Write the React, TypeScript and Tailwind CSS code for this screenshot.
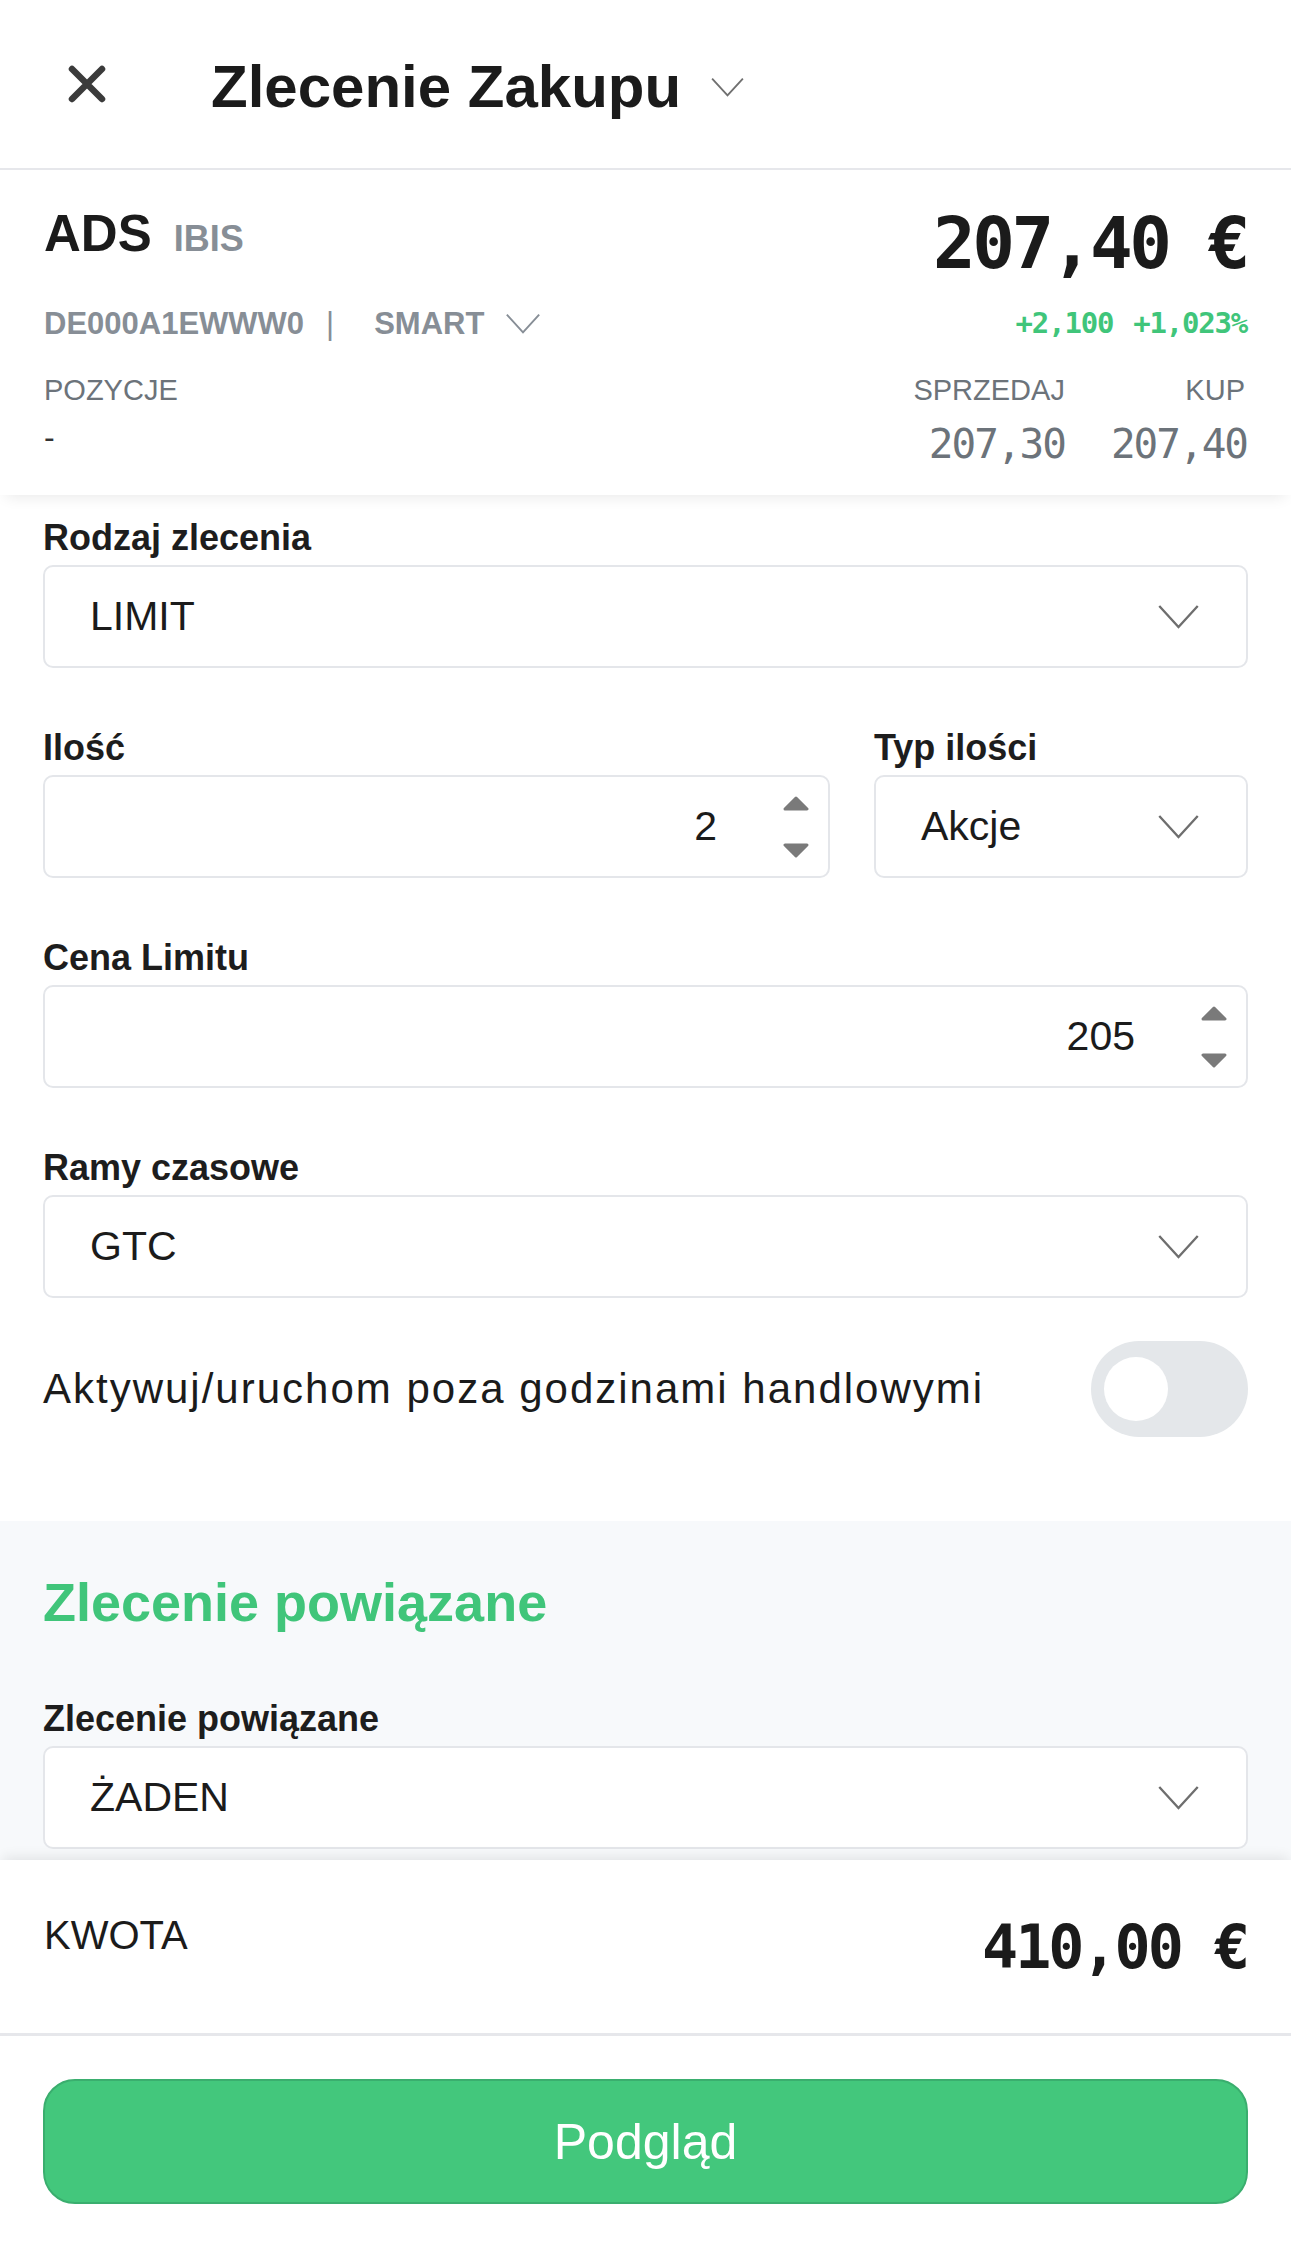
import React from 'react';

function Chevron({ className }: { className?: string }) {
  return (
    <svg viewBox="0 0 44 26" className={className} fill="none" stroke="currentColor" strokeWidth={2.4}>
      <path d="M2 2l20 22L42 2" />
    </svg>
  );
}

function Spinner({ className = '' }: { className?: string }) {
  return (
    <div className={`flex flex-col items-center gap-[32px] text-[#7a7a7a] ${className}`}>
      <svg width="26" height="15" viewBox="0 0 26 15">
        <path d="M13 2L24 13H2Z" fill="currentColor" stroke="currentColor" strokeWidth={3} strokeLinejoin="round" />
      </svg>
      <svg width="26" height="15" viewBox="0 0 26 15">
        <path d="M2 2H24L13 13Z" fill="currentColor" stroke="currentColor" strokeWidth={3} strokeLinejoin="round" />
      </svg>
    </div>
  );
}

function Label({ children }: { children: React.ReactNode }) {
  return <div className="mb-[9px] text-[36px] font-bold leading-none text-[#1d1d1d]">{children}</div>;
}

function SelectBox({ value }: { value: string }) {
  return (
    <div className="flex h-[103px] items-center justify-between rounded-[10px] border-2 border-[#e4e6ea] bg-white pl-[45px] pr-[46px]">
      <span className="text-[41px] leading-none text-[#1b1b1b]">{value}</span>
      <Chevron className="h-[25px] w-[43px] text-[#6e6e6e]" />
    </div>
  );
}

function NumberBox({ value }: { value: string }) {
  return (
    <div className="flex h-[103px] items-center justify-end rounded-[10px] border-2 border-[#e4e6ea] bg-white pr-[19px]">
      <span className="text-[41px] leading-none text-[#1b1b1b]">{value}</span>
      <Spinner className="ml-[66px]" />
    </div>
  );
}

export default function App() {
  return (
    <div className="flex h-[2246px] w-full flex-col overflow-hidden bg-white font-['Liberation_Sans',Arial,sans-serif] text-[#1b1b1b]">
      {/* header */}
      <div className="flex h-[170px] shrink-0 items-center border-b-2 border-[#e6e7eb] pl-[68px]">
        <svg width="38" height="38" viewBox="0 0 38 38" fill="none" stroke="#3b3b3b" strokeWidth={6.5} strokeLinecap="round">
          <path d="M4 4L34 34M34 4L4 34" />
        </svg>
        <div className="ml-[105px] mt-[6px] flex items-center">
          <span className="text-[60px] font-bold leading-none text-[#1b1b1b]">Zlecenie Zakupu</span>
          <Chevron className="ml-[27px] h-[20px] w-[39px] text-[#707070]" />
        </div>
      </div>

      {/* instrument */}
      <div className="relative z-10 shrink-0 bg-white px-[44px] pb-[30px] pt-[38px] shadow-[0_8px_14px_-6px_rgba(0,0,0,0.09)]">
        <div className="flex items-start justify-between">
          <div className="flex items-baseline">
            <span className="text-[51px] font-bold leading-none text-[#1b1b1b]">ADS</span>
            <span className="ml-[22px] text-[36px] font-bold leading-none text-[#878e96]">IBIS</span>
          </div>
          <div className="font-['DejaVu_Sans_Mono',monospace] text-[71px] font-bold leading-none tracking-[-3.5px] text-[#1b1b1b]">
            207,40 €
          </div>
        </div>

        <div className="mt-[29px] flex items-center justify-between">
          <div className="flex items-center text-[31px] font-bold leading-none text-[#878e96]">
            <span>DE000A1EWWW0</span>
            <span className="ml-[22px] font-normal">|</span>
            <span className="ml-[40px]">SMART</span>
            <Chevron className="ml-[20px] h-[21px] w-[38px] text-[#878e96]" />
          </div>
          <div className="flex gap-[20px] font-['DejaVu_Sans_Mono',monospace] text-[29px] font-bold leading-none tracking-[-1.2px] text-[#40c57a]">
            <span>+2,100</span>
            <span>+1,023%</span>
          </div>
        </div>

        <div className="mt-[37px] flex justify-between">
          <div>
            <div className="text-[29px] leading-none text-[#6c737a]">POZYCJE</div>
            <div className="mt-[12px] text-[32px] leading-[41px] text-[#333333]">-</div>
          </div>
          <div className="flex gap-[46px]">
            <div className="flex flex-col items-end">
              <div className="text-[29px] leading-none text-[#6c737a]">SPRZEDAJ</div>
              <div className="mt-[19px] font-['DejaVu_Sans_Mono',monospace] text-[41px] leading-none tracking-[-2px] text-[#6c737a]">
                207,30
              </div>
            </div>
            <div className="flex flex-col items-end">
              <div className="mr-[2px] text-[29px] leading-none text-[#6c737a]">KUP</div>
              <div className="mt-[19px] font-['DejaVu_Sans_Mono',monospace] text-[41px] leading-none tracking-[-2px] text-[#6c737a]">
                207,40
              </div>
            </div>
          </div>
        </div>
      </div>

      {/* scrolling form */}
      <div className="flex min-h-0 flex-1 flex-col overflow-hidden">
        <div className="flex flex-col gap-[62px] px-[43px] pb-[84px] pt-[25px]">
          <div>
            <Label>Rodzaj zlecenia</Label>
            <SelectBox value="LIMIT" />
          </div>

          <div className="grid grid-cols-[1fr_374px] gap-x-[44px]">
            <div>
              <Label>Ilość</Label>
              <NumberBox value="2" />
            </div>
            <div>
              <Label>Typ ilości</Label>
              <SelectBox value="Akcje" />
            </div>
          </div>

          <div>
            <Label>Cena Limitu</Label>
            <NumberBox value="205" />
          </div>

          <div>
            <Label>Ramy czasowe</Label>
            <SelectBox value="GTC" />
            <div className="mt-[43px] flex items-center justify-between">
              <span className="text-[42px] leading-none tracking-[2px] text-[#1b1b1b]">
                Aktywuj/uruchom poza godzinami handlowymi
              </span>
              <div className="flex h-[96px] w-[157px] items-center rounded-full bg-[#e4e7ea] pl-[13px]">
                <div className="h-[64px] w-[64px] rounded-full bg-white" />
              </div>
            </div>
          </div>
        </div>

        <div className="flex-1 bg-[#f7f9fb] px-[43px] pt-[54px]">
          <div className="text-[54px] font-bold leading-none text-[#40c57a]">Zlecenie powiązane</div>
          <div className="mt-[72px]">
            <Label>Zlecenie powiązane</Label>
            <SelectBox value="ŻADEN" />
          </div>
        </div>
      </div>

      {/* footer */}
      <div className="relative z-10 shrink-0 bg-white shadow-[0_-6px_12px_-3px_rgba(0,0,0,0.09)]">
        <div className="flex h-[176px] items-start justify-between border-b-[3px] border-[#e6e7eb] px-[44px]">
          <span className="mt-[55px] text-[40px] leading-none text-[#1b1b1b]">KWOTA</span>
          <span className="mt-[57px] font-['DejaVu_Sans_Mono',monospace] text-[60px] font-bold leading-none tracking-[-3px] text-[#1b1b1b]">
            410,00 €
          </span>
        </div>
        <div className="px-[43px] pb-[42px] pt-[43px]">
          <button className="h-[125px] w-full rounded-[32px] border-2 border-[#3aae6e] bg-[#43c77c] text-[50px] leading-none text-white">
            Podgląd
          </button>
        </div>
      </div>
    </div>
  );
}
